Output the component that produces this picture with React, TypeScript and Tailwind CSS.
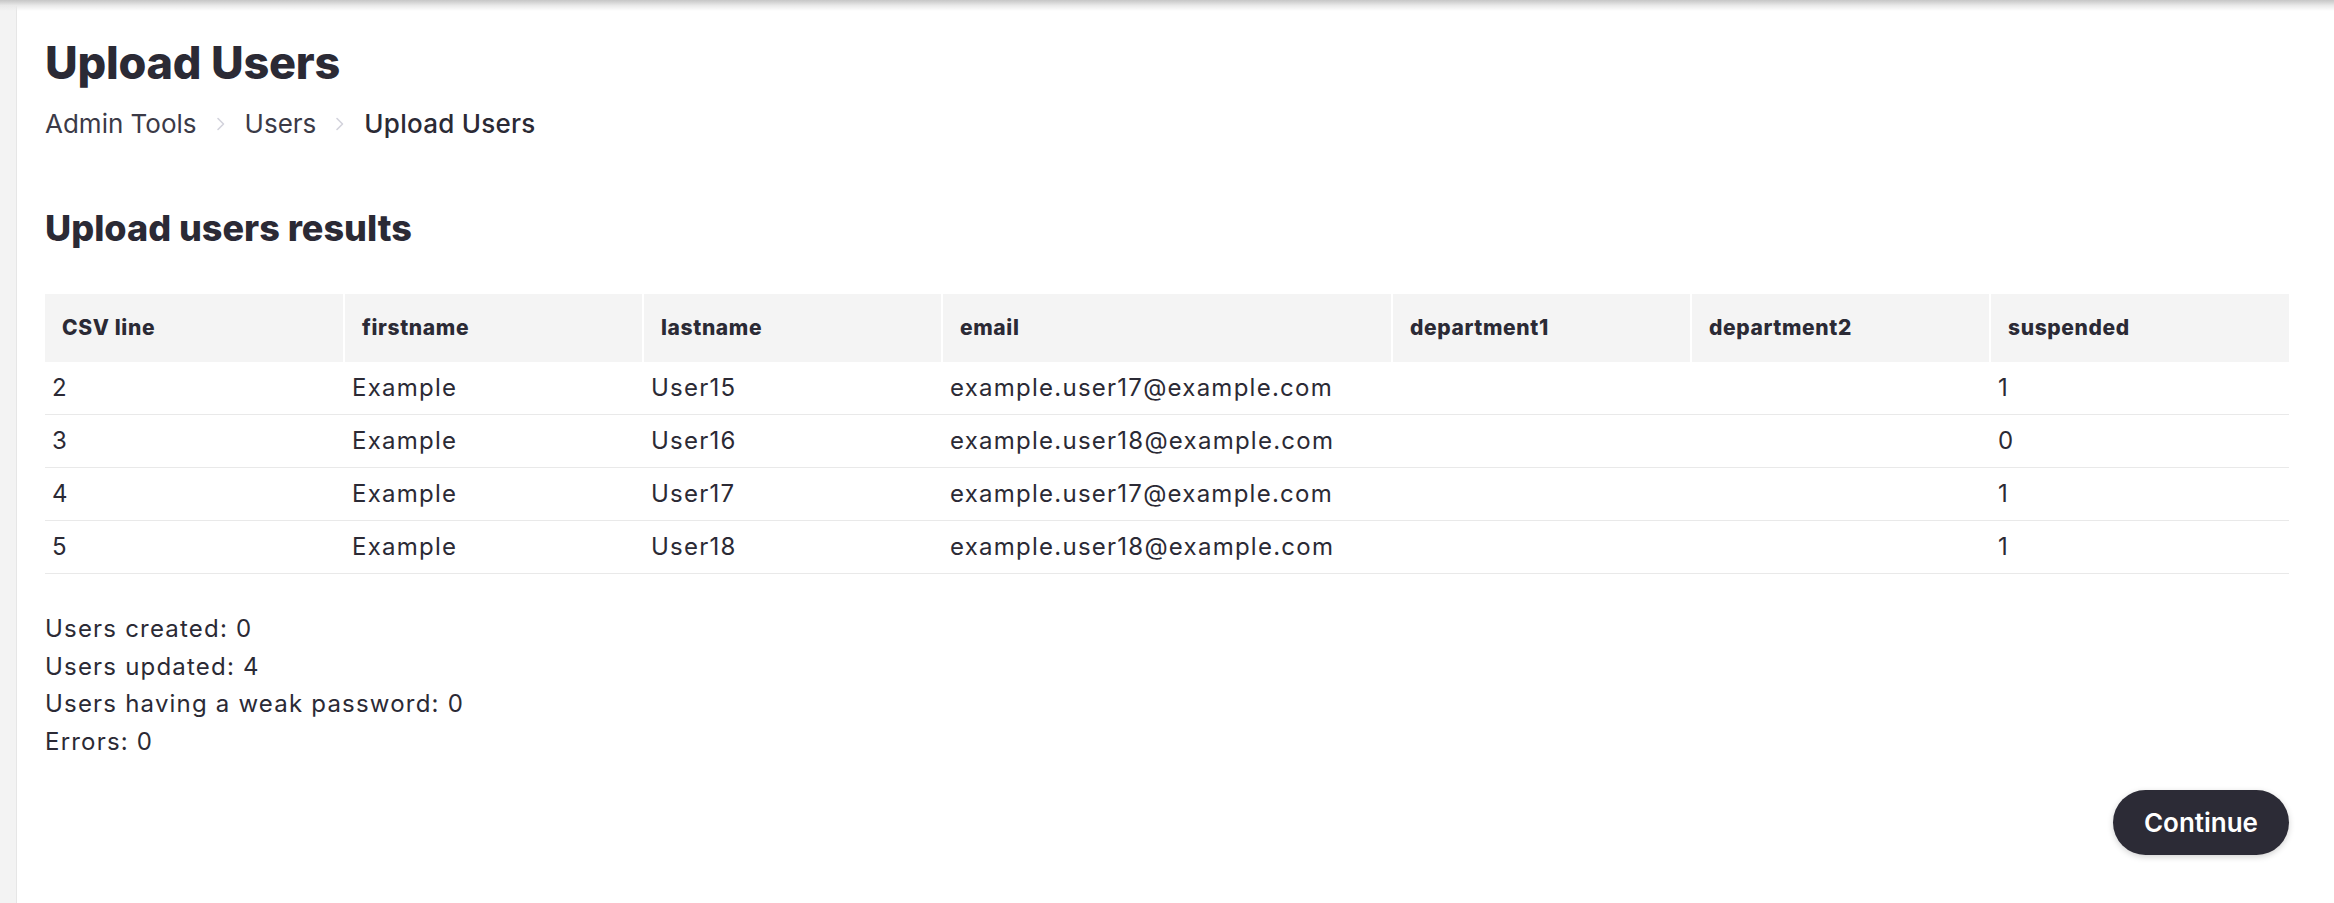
import React from "react";

type Row = {
  line: number;
  firstname: string;
  lastname: string;
  email: string;
  department1: string;
  department2: string;
  suspended: string;
};

const rows: Row[] = [
  { line: 2, firstname: "Example", lastname: "User15", email: "example.user17@example.com", department1: "", department2: "", suspended: "1" },
  { line: 3, firstname: "Example", lastname: "User16", email: "example.user18@example.com", department1: "", department2: "", suspended: "0" },
  { line: 4, firstname: "Example", lastname: "User17", email: "example.user17@example.com", department1: "", department2: "", suspended: "1" },
  { line: 5, firstname: "Example", lastname: "User18", email: "example.user18@example.com", department1: "", department2: "", suspended: "1" },
];

const columns = ["CSV line", "firstname", "lastname", "email", "department1", "department2", "suspended"];

function Chevron() {
  return (
    <svg width="10" height="14" viewBox="0 0 10 14" fill="none" className="shrink-0">
      <path d="M2 1.5 L7.5 7 L2 12.5" stroke="#d3d3dc" strokeWidth="1.6" strokeLinecap="round" strokeLinejoin="round" />
    </svg>
  );
}

export default function App() {
  return (
    <div className="relative flex min-h-screen w-full bg-white font-['Inter',sans-serif] text-[#2b2a35]">
      {/* top shadow from the header bar */}
      <div className="pointer-events-none absolute inset-x-0 top-0 h-[11px] bg-linear-to-b from-[#c6c6c6] via-[#e9e9e9] to-transparent" />
      <div className="w-[17px] shrink-0 border-r border-[#e6e6e6] bg-[#f3f3f3]" />
      <main className="flex-1 pl-[28px] pr-[45px] pt-[36px]">
        <h1 className="text-[45px] font-extrabold leading-[1.2] tracking-[-0.005em]">Upload Users</h1>
        <nav className="mt-[14px] flex items-center text-[26px] leading-[39px]">
          <span className="text-[#3b3a47]">Admin Tools</span>
          <span className="mx-[19px]"><Chevron /></span>
          <span className="text-[#3b3a47]">Users</span>
          <span className="mx-[19px]"><Chevron /></span>
          <span className="font-medium tracking-[0.01em] text-[#2b2a35]">Upload Users</span>
        </nav>

        <h2 className="mt-[62px] text-[36px] font-extrabold leading-[1.3]">Upload users results</h2>

        <table className="mt-[42px] w-full table-fixed border-collapse">
          <colgroup>
            <col className="w-[299px]" />
            <col className="w-[299px]" />
            <col className="w-[299px]" />
            <col className="w-[450px]" />
            <col className="w-[299px]" />
            <col className="w-[299px]" />
            <col className="w-[299px]" />
          </colgroup>
          <thead>
            <tr className="h-[68px] bg-[#f4f4f4]">
              {columns.map((c, i) => (
                <th
                  key={c}
                  className={
                    i === 0
                      ? "px-[17px] text-left text-[21px] font-extrabold tracking-[0.03em]"
                      : "border-l-2 border-white px-[17px] text-left text-[21px] font-extrabold tracking-[0.03em]"
                  }
                >
                  {c}
                </th>
              ))}
            </tr>
          </thead>
          <tbody className="text-[24px] tracking-[0.052em]">
            {rows.map((r) => (
              <tr key={r.line} className="h-[53px] border-b border-[#e9e9e9]">
                <td className="px-[7px]">{r.line}</td>
                <td className="px-[8px]">{r.firstname}</td>
                <td className="px-[8px]">{r.lastname}</td>
                <td className="px-[8px]">{r.email}</td>
                <td className="px-[8px]">{r.department1}</td>
                <td className="px-[8px]">{r.department2}</td>
                <td className="px-[8px]">{r.suspended}</td>
              </tr>
            ))}
          </tbody>
        </table>

        <div className="mt-[36px] text-[24px] leading-[37.5px] tracking-[0.05em]">
          <div>Users created: 0</div>
          <div>Users updated: 4</div>
          <div>Users having a weak password: 0</div>
          <div>Errors: 0</div>
        </div>

        <div className="mt-[30px] flex justify-end pb-[40px]">
          <button className="h-[65px] rounded-full bg-[#2c2b36] px-[31px] text-[26px] font-semibold text-white shadow-[0_2px_6px_rgba(0,0,0,0.18)]">
            Continue
          </button>
        </div>
      </main>
    </div>
  );
}
